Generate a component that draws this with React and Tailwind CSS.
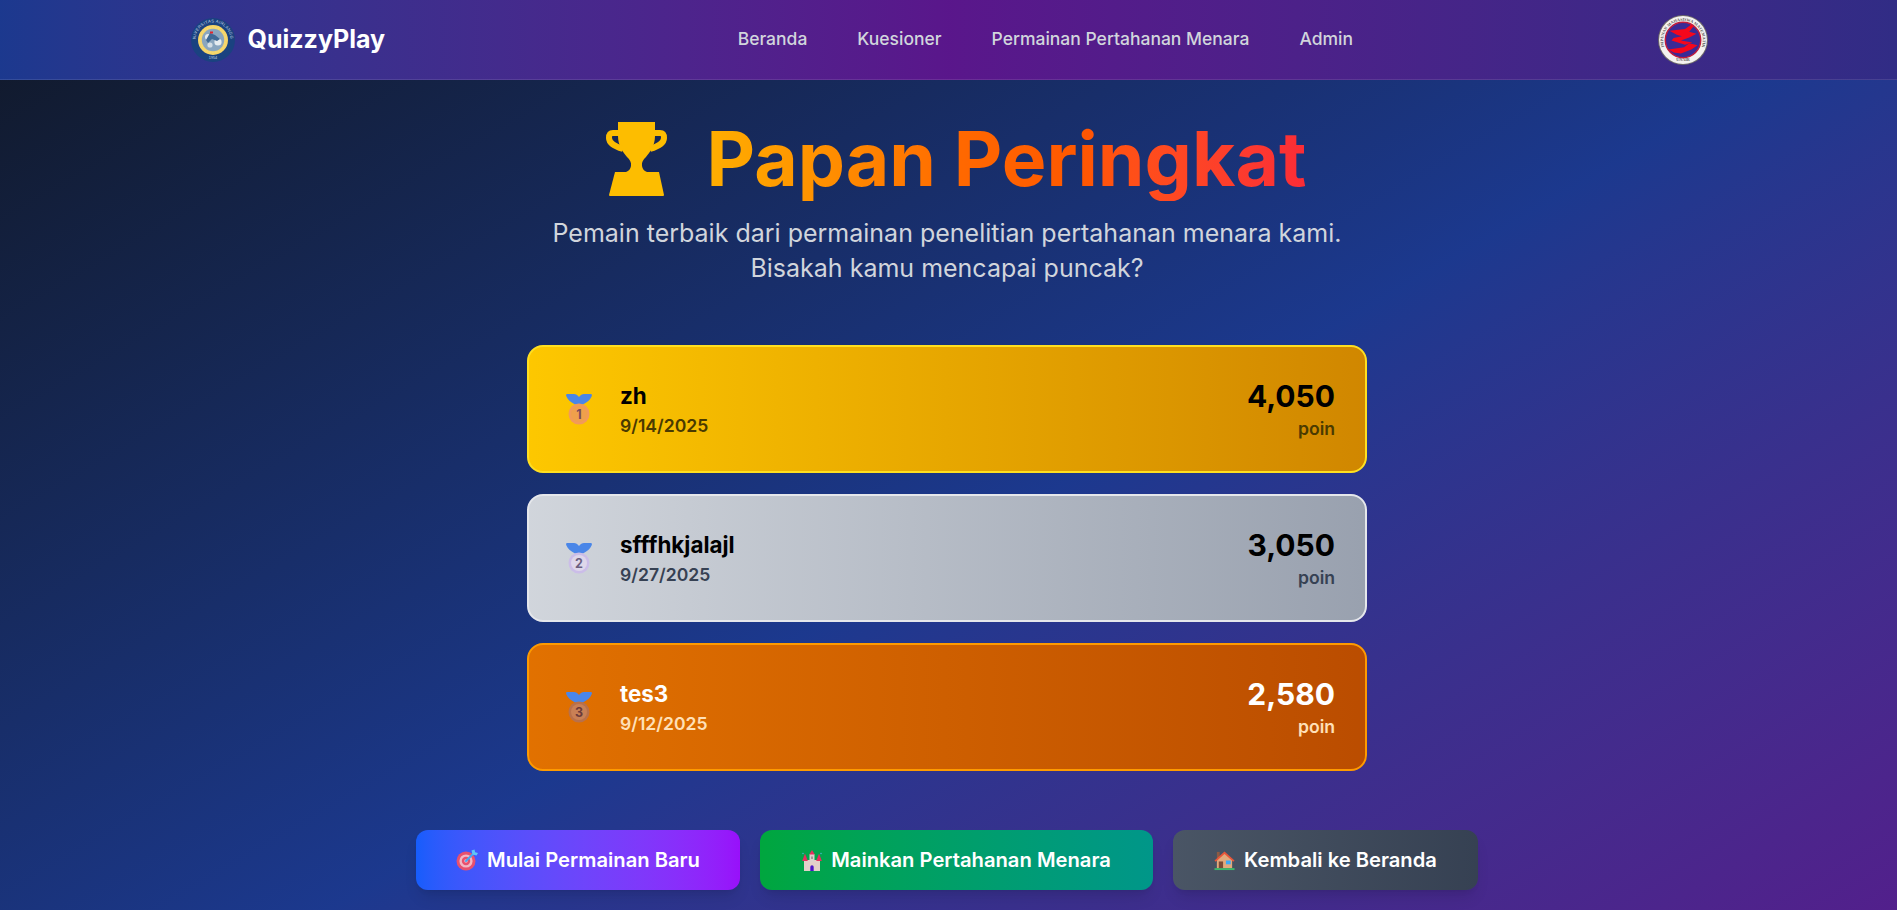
import React from "react";

const FONT = { fontFamily: 'Inter, "Liberation Sans", sans-serif' };

function SealLogo() {
  const dots = Array.from({ length: 28 }, (_, i) => {
    const a = (i / 28) * Math.PI * 2;
    return <circle key={i} cx={22 + Math.cos(a) * 12.5} cy={22 + Math.sin(a) * 12.5} r="1.1" fill="#f3d774" />;
  });
  return (
    <svg width="44" height="44" viewBox="0 0 44 44" className="shrink-0 overflow-visible">
      <defs>
        <path id="sealTop" d="M4.5 22a17.5 17.5 0 0 1 35 0" />
      </defs>
      <circle cx="22" cy="22" r="22" fill="#1a4280" />
      <text fontSize="4.2" fill="#c5d5e5" fontFamily="Liberation Sans, sans-serif" letterSpacing="0.3">
        <textPath href="#sealTop" startOffset="50%" textAnchor="middle">UNIVERSITAS AIRLANGGA</textPath>
      </text>
      <text x="22" y="40.500" fontSize="3.8" fill="#c5d5e5" textAnchor="middle" fontFamily="Liberation Sans, sans-serif">1954</text>
      <circle cx="22" cy="22" r="15" fill="#f7d566" />
      {dots}
      <circle cx="22" cy="22" r="11.200" fill="#8aa6bf" />
      <circle cx="17" cy="19" r="3" fill="#e6ecf0" />
      <circle cx="27" cy="24" r="3.600" fill="#e6ecf0" />
      <circle cx="19" cy="27" r="2.600" fill="#d3dde5" />
      <path d="M15 22l4-7 5 2 5 4-3 2-5-2-4 4z" fill="#3f6a96" />
      <rect x="19" y="13.500" width="3" height="2" fill="#e5252a" />
    </svg>
  );
}

function HimaLogo() {
  return (
    <svg width="50" height="50" viewBox="0 0 48 48" className="shrink-0 overflow-visible">
      <defs>
        <path id="himaRing" d="M5.800 30a19 19 0 1 1 36.400 0" />
      </defs>
      <circle cx="24" cy="24" r="24" fill="#6e6a6a" />
      <circle cx="24" cy="24" r="23" fill="#f4f2f0" />
      <text fontSize="4" fill="#5a5757" fontWeight="700" fontFamily="Liberation Serif, serif">
        <textPath href="#himaRing" startOffset="50%" textAnchor="middle">HIMPUNAN MAHASISWA MATEMATIKA</textPath>
      </text>
      <text x="24" y="44.600" fontSize="4" fill="#5a5757" fontWeight="700" textAnchor="middle" fontFamily="Liberation Serif, serif">UNAIR</text>
      <circle cx="24" cy="24" r="17" fill="#3a2a96" stroke="#c01c3c" strokeWidth="1.400" />
      <path d="M11 15l15-1.500 6-4.500 2 2-4 5 7 2-7 3.500-8 3 11 2-7 2-13-4 2-2.500 8-1.500-5-1.500z" fill="#f5071c" />
      <path d="M10 33l15-2 5-4 8 2-6 4-10 4-7-1z" fill="#f5071c" />
    </svg>
  );
}

function Trophy() {
  return (
    <svg width="61" height="74" viewBox="6 6 61 74" className="shrink-0">
      <path d="M18 6H55V20C55 30 50 36 46 41C43 44 41.500 46 42 50C42.500 53 44 55 47 56H26C29 55 30.500 53 31 50C31.500 46 30 44 27 41C23 36 18 30 18 20Z" fill="#fdbd00" />
      <path d="M20 17H13C10 17 9 19 9 22C9 27 14 30 23 33" fill="none" stroke="#fdbd00" strokeWidth="6" />
      <path d="M53 17H60C63 17 64 19 64 22C64 27 59 30 50 33" fill="none" stroke="#fdbd00" strokeWidth="6" />
      <path d="M15 56H59L64 79Q64 80 63 80H10Q9 80 9 79Z" fill="#fdbd00" />
    </svg>
  );
}

function Medal({ n, disc, rim, ink }) {
  return (
    <svg width="26" height="31" viewBox="0 0 26 31" className="ml-[5px] shrink-0">
      <path d="M1.500 0H8C10 0 11.500 1 13 3C14.500 1 16 0 18 0H24.500C25.800 0 26.200 1 25.700 2.200C24.300 5.500 21 8.500 17 10.500L13 12L9 10.500C5 8.500 1.700 5.500 .3 2.200C-.2 1 .2 0 1.500 0Z" fill="#4a86e8" />
      <circle cx="13" cy="20" r="10.500" fill={rim} />
      <circle cx="13" cy="20" r="8" fill={disc} />
      <text x="13" y="24.500" textAnchor="middle" fontSize="12.500" fontWeight="700" fill={ink} fontFamily="Inter, sans-serif">{n}</text>
    </svg>
  );
}

function TargetIcon() {
  return (
    <svg width="22" height="22" viewBox="0 0 22 22" className="shrink-0">
      <circle cx="10" cy="12" r="9.500" fill="#e8506e" />
      <circle cx="10" cy="12" r="6.600" fill="#f3b6c4" />
      <circle cx="10" cy="12" r="4.200" fill="#e8506e" />
      <circle cx="10" cy="12" r="1.800" fill="#f3b6c4" />
      <path d="M10 12L18 4" stroke="#3fa9f5" strokeWidth="2" strokeLinecap="round" />
      <path d="M15.500 1.500l1 4 4 1 1.500-2.500-2.800-.7-.7-2.800z" fill="#5ec4f7" />
    </svg>
  );
}

function CastleIcon() {
  return (
    <svg width="20" height="21" viewBox="0 0 20 21" className="shrink-0">
      <path d="M2 10h16v11H2z" fill="#e3cfc9" />
      <path d="M7.500 4h5v8h-5z" fill="#ded0cd" />
      <path d="M10 0l2.800 4.500H7.200z" fill="#e5305f" />
      <path d="M3 3.500l2.800 7.500H.2z" fill="#e5305f" />
      <path d="M17 3.500l2.800 7.500h-5.600z" fill="#e5305f" />
      <path d="M8.300 21v-4a1.700 1.700 0 0 1 3.400 0v4z" fill="#4c16c9" />
      <rect x="9.300" y="6.500" width="1.400" height="2.500" fill="#8a7f7d" />
      <circle cx="1" cy="3.500" r="0.800" fill="#43b4c9" />
      <circle cx="19" cy="3.500" r="0.800" fill="#43b4c9" />
    </svg>
  );
}

function HouseIcon() {
  return (
    <svg width="21" height="21" viewBox="0 0 22 22" className="shrink-0">
      <rect x="3" y="2" width="3" height="7" fill="#8d5a44" />
      <path d="M3 10l8-7 8 7v9H3z" fill="#e2aa7c" />
      <path d="M.5 11L11 1.500 21.500 11l-1.300 1.300L11 4.300 1.800 12.300z" fill="#e8563a" />
      <rect x="5" y="12" width="4.500" height="7" fill="#7c4a36" />
      <rect x="12.500" y="11" width="5" height="4" fill="#3fa9f5" />
      <rect x=".5" y="19" width="21" height="2" fill="#3fb86a" />
    </svg>
  );
}

const ROWS = [
  {
    name: "zh", date: "9/14/2025", score: "4,050",
    box: "border-yellow-300 from-yellow-400 to-yellow-600", main: "text-black", sub: "text-[#4a3a00]",
    medal: { n: 1, disc: "#f0a04b", rim: "#f29a5a", ink: "#7b4a5a" },
  },
  {
    name: "sfffhkjalajl", date: "9/27/2025", score: "3,050",
    box: "border-gray-200 from-gray-300 to-gray-400", main: "text-black", sub: "text-[#364153]",
    medal: { n: 2, disc: "#ded7ea", rim: "#cbbde8", ink: "#6b5f80" },
  },
  {
    name: "tes3", date: "9/12/2025", score: "2,580",
    box: "border-amber-500 from-amber-600 to-amber-700", main: "text-white", sub: "text-[#ffe0b8]",
    medal: { n: 3, disc: "#c98055", rim: "#b9704a", ink: "#6b3a3a" },
  },
];

function Row({ r }) {
  return (
    <div className={`flex h-32 items-center justify-between rounded-2xl border-2 bg-gradient-to-r pr-[30px] pl-8 ${r.box}`}>
      <div className="flex items-center gap-[28px]">
        <Medal {...r.medal} />
        <div className="pt-[2px]">
          <div className={`text-[22.4px] leading-[30px] font-bold ${r.main}`}>{r.name}</div>
          <div className={`mt-[1px] text-[17.6px] leading-7 font-semibold ${r.sub}`}>{r.date}</div>
        </div>
      </div>
      <div className="pb-[2px] text-right">
        <div className={`text-3xl leading-10 font-bold ${r.main}`}>{r.score}</div>
        <div className={`mt-[1px] text-[17.6px] leading-6 font-semibold ${r.sub}`}>poin</div>
      </div>
    </div>
  );
}

function Btn({ cls, w, icon, children }) {
  return (
    <a className={`flex h-[60px] items-center justify-center gap-[9px] rounded-xl bg-gradient-to-r text-[20.2px] font-semibold text-white shadow-lg ${cls} ${w}`}>
      {icon}
      {children}
    </a>
  );
}

export default function App() {
  return (
    <div style={FONT} className="flex min-h-screen flex-col overflow-hidden bg-gray-900 bg-gradient-to-br from-gray-900 via-blue-900 to-purple-900 bg-[length:100%_1100px] bg-no-repeat">
      <nav className="border-b border-white/10 bg-gradient-to-r from-blue-900 via-purple-900 to-indigo-900">
        <div className="mx-auto flex h-[79px] w-[1536px] items-center justify-between pr-[9px] pl-[10px]">
          <div className="flex items-center gap-[13px]">
            <SealLogo />
            <span className="text-[25px] font-bold text-white">QuizzyPlay</span>
          </div>
          <div className="ml-[48px] flex items-center gap-[50px] text-[17.5px] font-medium text-gray-300">
            <a>Beranda</a>
            <a>Kuesioner</a>
            <a>Permainan Pertahanan Menara</a>
            <a>Admin</a>
          </div>
          <HimaLogo />
        </div>
      </nav>

      <main className="flex flex-col items-center pr-[3px]">
        <div className="mt-[36px] ml-[18px] flex items-center gap-[40px] bg-gradient-to-r from-yellow-400 via-orange-500 to-red-500 bg-clip-text text-transparent">
          <Trophy />
          <h1 className="text-[75px] leading-[85px] font-bold">Papan Peringkat</h1>
        </div>
        <p className="mt-[15px] w-[896px] text-center text-[25px] leading-[35px] text-gray-300">
          Pemain terbaik dari permainan penelitian pertahanan menara kami.
          <br />
          Bisakah kamu mencapai puncak?
        </p>

        <div className="mt-[59px] flex w-[840px] flex-col gap-[21px]">
          {ROWS.map((r) => (
            <Row key={r.name} r={r} />
          ))}
        </div>

        <div className="mt-[59px] flex gap-5">
          <Btn cls="from-blue-600 to-purple-600" w="w-[324px]" icon={<TargetIcon />}>Mulai Permainan Baru</Btn>
          <Btn cls="from-green-600 to-teal-600" w="w-[393px]" icon={<CastleIcon />}>Mainkan Pertahanan Menara</Btn>
          <Btn cls="from-gray-600 to-gray-700" w="w-[305px]" icon={<HouseIcon />}>Kembali ke Beranda</Btn>
        </div>
      </main>
    </div>
  );
}
